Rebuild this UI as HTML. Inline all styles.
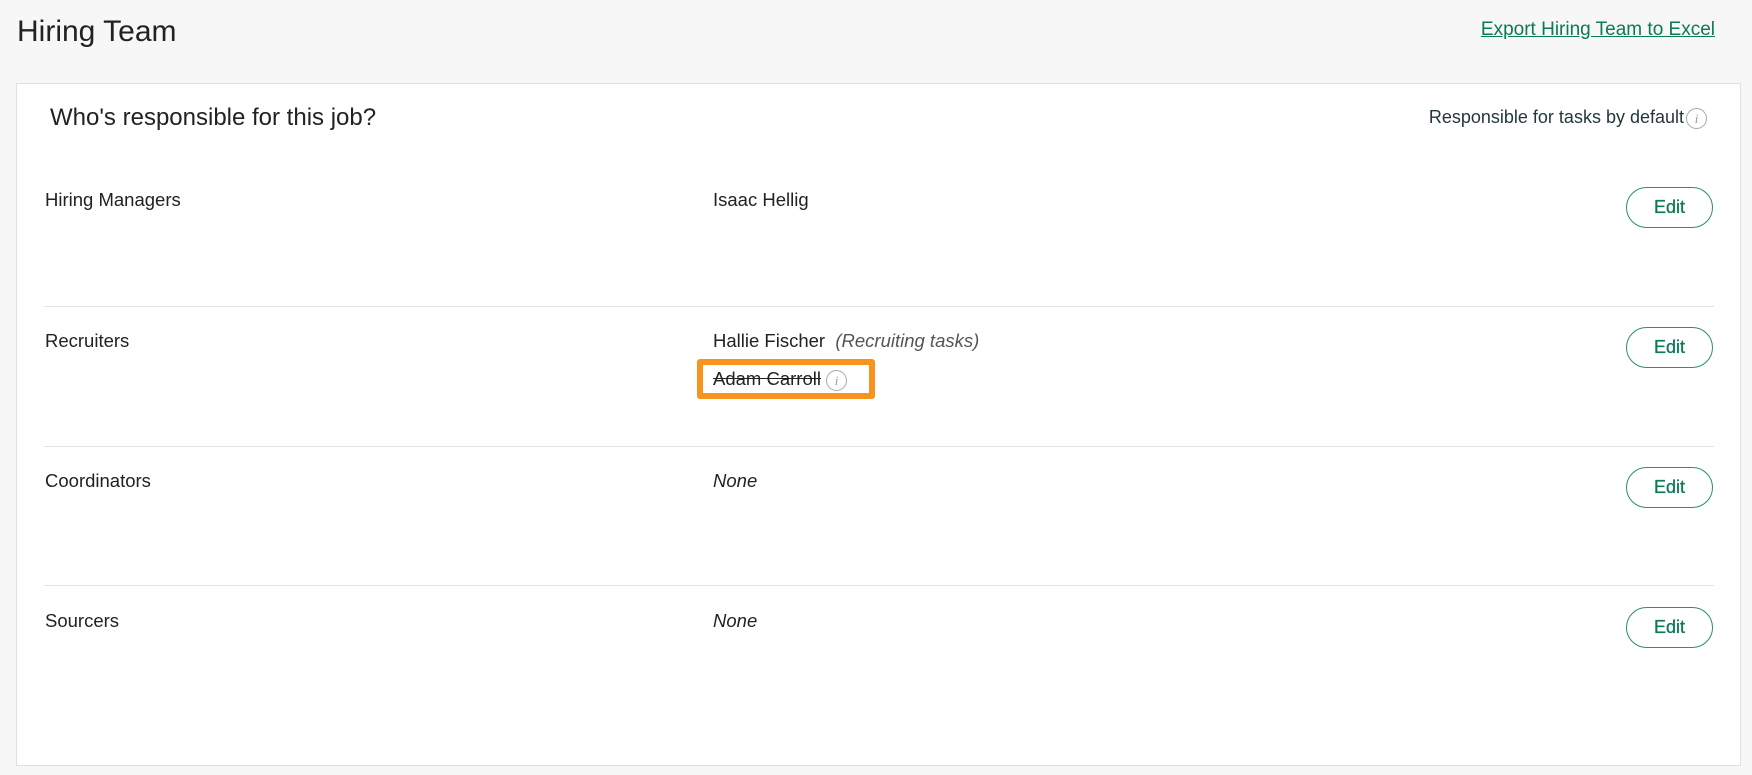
<!DOCTYPE html>
<html><head><style>
body{margin:0;width:1752px;height:775px;background:#f7f7f7;font-family:"Liberation Sans",sans-serif;color:#222;position:relative;overflow:hidden}
.a{position:absolute;white-space:nowrap}
.t{font-size:30px;left:17px;top:15px}
.exp{right:37px;top:19px;font-size:19px;color:#0b7a57;text-decoration:underline}
.card{position:absolute;left:16px;top:83px;width:1725px;height:683px;background:#fff;border:1px solid #e0e0e0;box-sizing:border-box}
.h{left:50px;top:104px;font-size:24px}
.resp{right:68px;top:107px;font-size:18px;color:#24373a}
.lab{left:45px;font-size:18.5px}
.nm{left:713px;font-size:18.5px}
.div{position:absolute;left:44px;width:1670px;height:1px;background:#e2e2e2}
.edit{position:absolute;left:1626px;width:87px;height:41px;border:1px solid #2e8d6c;border-radius:21px;box-sizing:border-box;color:#0b7a57;font-size:18px;text-align:center;line-height:39px;background:#fff;-webkit-text-stroke:0.3px #0b7a57}
.ic{display:inline-block;width:21px;height:21px;border:1px solid #aaa;border-radius:50%;box-sizing:border-box;font:italic 13px "Liberation Serif",serif;color:#999;text-align:center;line-height:19px;vertical-align:middle}
.ob{position:absolute;left:697px;top:359px;width:178px;height:40px;border:6px solid #f7941d;border-radius:3px;box-sizing:border-box}
</style></head><body>
<div class="a t">Hiring Team</div>
<div class="a exp">Export Hiring Team to Excel</div>
<div class="card"></div>
<div class="a h">Who's responsible for this job?</div>
<div class="a resp">Responsible for tasks by default</div>
<div class="a" style="left:1686px;top:108px"><span class="ic">i</span></div>

<div class="a lab" style="top:189px">Hiring Managers</div>
<div class="a nm" style="top:189px">Isaac Hellig</div>
<div class="edit" style="top:187px">Edit</div>
<div class="div" style="top:306px"></div>

<div class="a lab" style="top:330px">Recruiters</div>
<div class="a nm" style="top:330px">Hallie Fischer &nbsp;<i style="color:#555">(Recruiting tasks)</i></div>
<div class="ob"></div>
<div class="a nm" style="top:368px"><s>Adam Carroll</s> <span class="ic">i</span></div>
<div class="edit" style="top:327px">Edit</div>
<div class="div" style="top:446px"></div>

<div class="a lab" style="top:470px">Coordinators</div>
<div class="a nm" style="top:470px"><i>None</i></div>
<div class="edit" style="top:467px">Edit</div>
<div class="div" style="top:585px"></div>

<div class="a lab" style="top:610px">Sourcers</div>
<div class="a nm" style="top:610px"><i>None</i></div>
<div class="edit" style="top:607px">Edit</div>
</body></html>
